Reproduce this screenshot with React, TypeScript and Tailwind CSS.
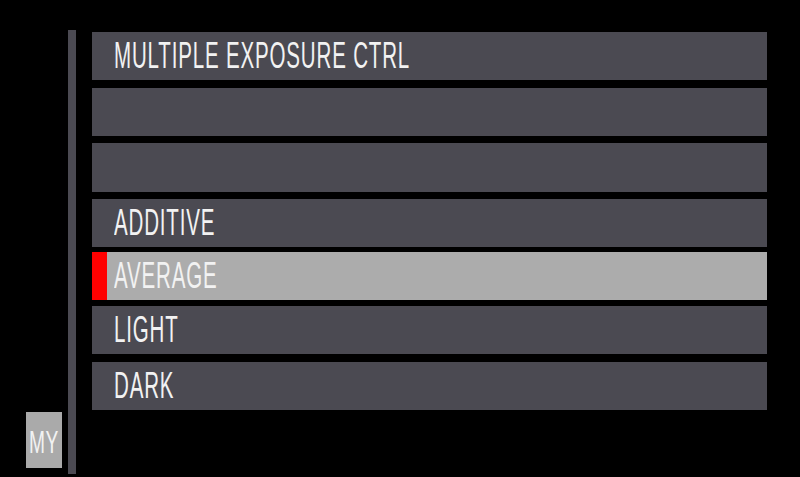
const rows = [
  { label: 'MULTIPLE EXPOSURE CTRL', gap: 'mt-0', h: 'h-[48px]' },
  { label: '', gap: 'mt-[8px]', h: 'h-[48px]' },
  { label: '', gap: 'mt-[7px]', h: 'h-[49px]' },
  { label: 'ADDITIVE', gap: 'mt-[7px]', h: 'h-[48px]' },
  { label: 'AVERAGE', selected: true, gap: 'mt-[5px]', h: 'h-[48px]' },
  { label: 'LIGHT', gap: 'mt-[6px]', h: 'h-[48px]' },
  { label: 'DARK', gap: 'mt-[8px]', h: 'h-[48px]' },
]

const font = { fontFamily: '"Liberation Sans", Arial, sans-serif' }

function Label({ text }: { text: string }) {
  return (
    <span className="inline-block origin-left scale-x-[0.555] text-[37px] tracking-[0.04em] leading-none text-[#f2f2f2] whitespace-nowrap">
      {text}
    </span>
  )
}

export default function App() {
  return (
    <div className="flex w-[800px] h-[477px] bg-black overflow-hidden" style={font}>
      {/* left tab */}
      <div className="w-[68px] flex flex-col justify-end pb-[9px] pl-[26px]">
        <div className="w-[36px] h-[56px] bg-[#aaaaaa] flex items-center justify-center overflow-visible">
          <span className="inline-block scale-x-[0.6] text-[32px] tracking-[0.03em] leading-none text-[#f2f2f2] translate-y-[2px]">
            MY
          </span>
        </div>
      </div>
      <div className="w-[8px] mt-[30px] mb-[3px] bg-[#4b4a52]" />

      {/* menu */}
      <div className="ml-[16px] mt-[32px] w-[675px] flex flex-col">
        {rows.map((row, i) => (
          <div
            key={i}
            className={`${row.h} flex items-center ${row.gap} ${row.selected ? 'bg-[#acacac]' : 'bg-[#4b4a52]'}`}
          >
            {row.selected ? (
              <>
                <div className="w-[15px] h-full bg-[#ff0000]" />
                <div className="pl-[7px]">
                  <Label text={row.label} />
                </div>
              </>
            ) : (
              <div className="pl-[22px]">
                <Label text={row.label} />
              </div>
            )}
          </div>
        ))}
      </div>
    </div>
  )
}
